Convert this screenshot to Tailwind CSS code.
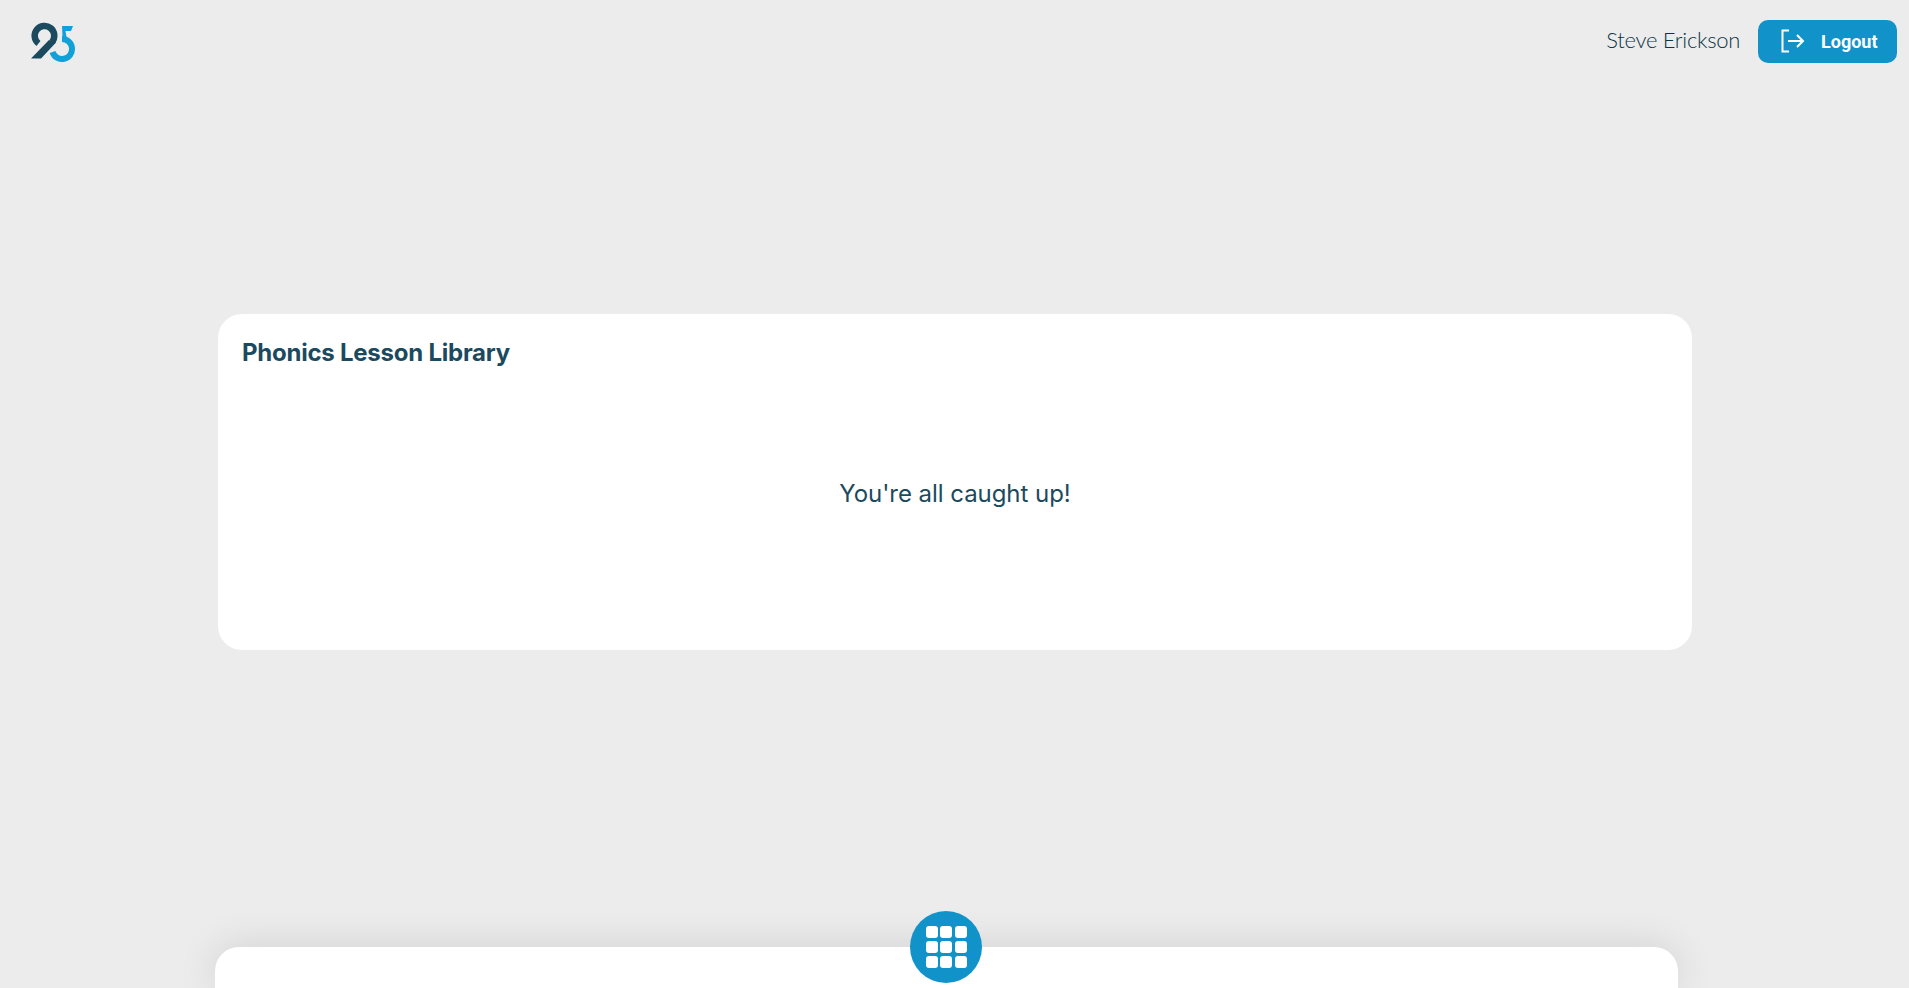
<!DOCTYPE html>
<html lang="en">
<head>
  <meta charset="UTF-8" />
  <meta name="viewport" content="width=device-width, initial-scale=1.0" />
  <title>Phonics Lesson Library</title>
  <script src="https://cdn.jsdelivr.net/npm/@tailwindcss/browser@4"></script>
</head>
<body class="bg-[#ececec] font-['Inter',sans-serif] text-[#1b4a5e] h-[988px] overflow-hidden relative">
  <!-- Header -->
  <header class="flex items-center justify-between h-[84px] pl-[30px] pr-[12px]">
    <svg class="w-[46px] h-[40px]" viewBox="30 21 46 40" fill="none">
      <path d="M62 38 A10 10 0 1 1 52.5 51" stroke="#12a0d8" stroke-width="6"/>
      <path d="M62 25 H73 L71 30 H65.5 L66.5 36 L62.5 36.5 Z" fill="#12a0d8"/>
      <path d="M38.5 42.5 A9.8 9.8 0 1 1 52 41" stroke="#1b4a5e" stroke-width="6.5"/>
      <path d="M31 57.5 H41 L56 41.5 L49 39 Z" fill="#1b4a5e"/>
    </svg>
    <div class="flex items-center gap-[18px] -mt-[1px]">
      <span class="font-['Lato',sans-serif] font-light text-[#0d3547] text-[22px] tracking-[-0.3px] -mt-[5px]">Steve Erickson</span>
      <button class="flex items-center w-[139px] h-[43px] pl-[23px] pb-[1px] rounded-[10px] bg-[#1193c9] text-white font-['Roboto',sans-serif] font-bold text-[18px]">
        <svg class="w-[24px] h-[24px] mr-[16px]" viewBox="0 0 24 24" fill="none" stroke="currentColor" stroke-width="2">
          <path d="M8 1.5 H1.5 V22.5 H8" />
          <path d="M7 12 H22 M16 6 L22 12 L16 18" />
        </svg>
        Logout
      </button>
    </div>
  </header>

  <!-- Lesson library card -->
  <main class="ml-[218px] mt-[230px] w-[1474px] h-[336px] bg-white rounded-[24px] pt-[25px] px-[24px]">
    <h2 class="text-[24px] leading-[28px] font-bold tracking-[-0.24px]">Phonics Lesson Library</h2>
    <p class="mt-[111px] text-center text-[24px] leading-[32px] tracking-[-0.05px]">You're all caught up!</p>
  </main>

  <!-- Bottom drawer -->
  <div class="absolute left-[215px] top-[947px] w-[1463px] h-[41px] bg-white rounded-t-[24px] shadow-[0_0_40px_rgba(0,0,0,0.12)]"></div>
  <button class="absolute left-[910px] top-[911px] w-[72px] h-[72px] rounded-full bg-[#1193c9] grid grid-cols-3 gap-[3px] p-[16px] place-content-center">
    <span class="block w-[12px] h-[12px] rounded-[3px] bg-white"></span>
    <span class="block w-[12px] h-[12px] rounded-[3px] bg-white"></span>
    <span class="block w-[12px] h-[12px] rounded-[3px] bg-white"></span>
    <span class="block w-[12px] h-[12px] rounded-[3px] bg-white"></span>
    <span class="block w-[12px] h-[12px] rounded-[3px] bg-white"></span>
    <span class="block w-[12px] h-[12px] rounded-[3px] bg-white"></span>
    <span class="block w-[12px] h-[12px] rounded-[3px] bg-white"></span>
    <span class="block w-[12px] h-[12px] rounded-[3px] bg-white"></span>
    <span class="block w-[12px] h-[12px] rounded-[3px] bg-white"></span>
  </button>
</body>
</html>
